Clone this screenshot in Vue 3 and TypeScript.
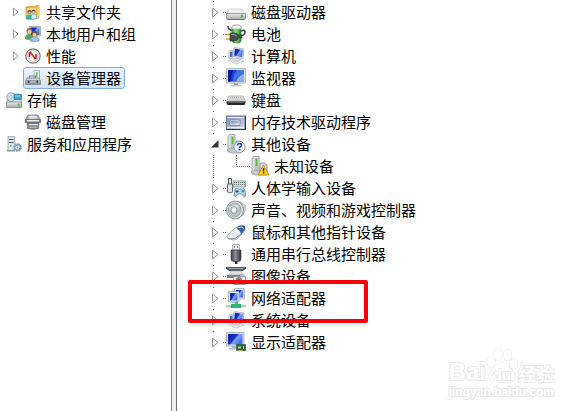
<script setup lang="ts">
import { ref } from 'vue'

interface ConsoleItem {
  label: string
  icon: string
  level: number
  expandable?: boolean
  selected?: boolean
}

interface Device {
  label: string
  icon: string
  children?: { label: string; icon: string }[]
}

const consoleItems: ConsoleItem[] = [
  { label: '共享文件夹', icon: 'share', level: 1, expandable: true },
  { label: '本地用户和组', icon: 'users', level: 1, expandable: true },
  { label: '性能', icon: 'perf', level: 1, expandable: true },
  { label: '设备管理器', icon: 'devmgr', level: 1, selected: true },
  { label: '存储', icon: 'storage', level: 0 },
  { label: '磁盘管理', icon: 'diskmgr', level: 1 },
  { label: '服务和应用程序', icon: 'services', level: 0 },
]

const devices: Device[] = [
  { label: '磁盘驱动器', icon: 'disk' },
  { label: '电池', icon: 'battery' },
  { label: '计算机', icon: 'computer' },
  { label: '监视器', icon: 'monitor' },
  { label: '键盘', icon: 'keyboard' },
  { label: '内存技术驱动程序', icon: 'memory' },
  { label: '其他设备', icon: 'other', children: [{ label: '未知设备', icon: 'unknown' }] },
  { label: '人体学输入设备', icon: 'hid' },
  { label: '声音、视频和游戏控制器', icon: 'sound' },
  { label: '鼠标和其他指针设备', icon: 'mouse' },
  { label: '通用串行总线控制器', icon: 'usb' },
  { label: '图像设备', icon: 'imaging' },
  { label: '网络适配器', icon: 'network' },
  { label: '系统设备', icon: 'computer' },
  { label: '显示适配器', icon: 'display' },
]

const othersOpen = ref(true)

function toggle(device: Device) {
  if (device.children) othersOpen.value = !othersOpen.value
}
</script>

<template>
  <svg class="defs" aria-hidden="true">
    <defs>
      <linearGradient id="screen" x1="0" y1="0" x2="1" y2="0.6">
        <stop offset="0" stop-color="#0a1a9c" />
        <stop offset="0.5" stop-color="#1531cf" />
        <stop offset="0.6" stop-color="#7fa5f3" />
        <stop offset="1" stop-color="#3f6ce8" />
      </linearGradient>
      <linearGradient id="metal" x1="0" y1="0" x2="0" y2="1">
        <stop offset="0" stop-color="#e9ebec" />
        <stop offset="1" stop-color="#a3a8ad" />
      </linearGradient>
      <linearGradient id="green" x1="0" y1="0" x2="1" y2="0">
        <stop offset="0" stop-color="#2c9c2c" />
        <stop offset="0.4" stop-color="#8bea78" />
        <stop offset="1" stop-color="#1d8426" />
      </linearGradient>
      <linearGradient id="dark" x1="0" y1="0" x2="1" y2="0">
        <stop offset="0" stop-color="#3e4146" />
        <stop offset="0.45" stop-color="#8d9096" />
        <stop offset="1" stop-color="#303236" />
      </linearGradient>
      <linearGradient id="slate" x1="0" y1="0" x2="1" y2="1">
        <stop offset="0" stop-color="#8590b8" />
        <stop offset="1" stop-color="#d3daee" />
      </linearGradient>
    </defs>

    <symbol id="share" viewBox="0 0 16 16">
      <path d="M1 3l6-1 1 1 5-2 1 1v12l-5 1H1z" fill="#e2b04a" stroke="#c99a3c" stroke-width=".7" />
      <path d="M2 4h9v10H2z" fill="#f6d98a" />
      <path d="M12 3l2-1v11l-2 1z" fill="#f5cf62" />
      <circle cx="4.5" cy="8" r="2" fill="#5b4636" /><circle cx="8.500" cy="7.500" r="2" fill="#67503c" />
      <circle cx="4.500" cy="8.600" r="1.200" fill="#f1cda8" /><circle cx="8.500" cy="8.200" r="1.200" fill="#f1cda8" />
      <path d="M1 15q0-4.500 3.500-4.500T8 15q-3 1-7 0z" fill="#35b8a6" />
      <path d="M6 13.500q0-3.500 3-3.500t2.500 4.500q-2 1-5 .5z" fill="#d6edf2" stroke="#3d9bb4" stroke-width=".6" />
    </symbol>

    <symbol id="users" viewBox="0 0 16 16">
      <path d="M4.500.5h11v9.500h-11z" fill="#d8dde3" stroke="#8d98a4" stroke-width=".7" />
      <path d="M5.500 1.500h9V9h-9z" fill="url(#screen)" />
      <circle cx="4.500" cy="5" r="3" fill="#8a6f52" /><circle cx="4.500" cy="6" r="2" fill="#efc7a1" />
      <path d="M0 13q0-5 4-5t4 5q-4 2-8 0z" fill="#4fac62" />
      <circle cx="9.500" cy="8" r="3" fill="#71543c" /><circle cx="9.500" cy="9" r="2" fill="#f2cda9" />
      <path d="M5 15q0-4 4.500-4t4.500 4q-4.500 1.500-9 0z" fill="#9cc5e8" stroke="#4a7db0" stroke-width=".5" />
    </symbol>

    <symbol id="perf" viewBox="0 0 16 16">
      <circle cx="8" cy="8" r="7.200" fill="#f4f4f4" stroke="#7b7b78" stroke-width="1.200" />
      <circle cx="8" cy="8" r="5.400" fill="#fff" stroke="#c4c4c0" stroke-width=".8" />
      <path d="M4.500 9V5l1-.5 4.500 6 1-.5V6" fill="none" stroke="#d31b1b" stroke-width="1.600" />
    </symbol>

    <symbol id="devmgr" viewBox="0 0 16 16">
      <path d="M9 .5h5.500v9H9z" fill="#eef1f2" stroke="#9aa2a6" stroke-width=".8" />
      <path d="M11 2h1.500v5H11z" fill="#63bd5c" />
      <path d="M4.500 8V6h6v2" fill="none" stroke="#7e878e" stroke-width="1.200" />
      <path d="M2 8h12l1.500 3H.5z" fill="#cfd5da" stroke="#717b84" stroke-width=".7" />
      <path d="M.5 11h15v3.500H.5z" fill="#8d979f" stroke="#656f77" stroke-width=".6" />
      <path d="M1 11.500h14v1H1z" fill="#c2cad0" /><path d="M3 10.500h1.500V13H3zm8.500 0H13V13h-1.500z" fill="#3e474f" />
    </symbol>

    <symbol id="storage" viewBox="0 0 16 16">
      <path d="M1 9l2-7h11l1.500 8v5H1z" fill="#dfe2e4" stroke="#858c91" stroke-width=".7" />
      <circle cx="5" cy="5" r="4.300" fill="#cfe3e6" stroke="#718792" stroke-width=".7" />
      <circle cx="5" cy="5" r="1.300" fill="#fff" stroke="#7e9198" stroke-width=".5" />
      <path d="M8 2.500h7.500v5H8z" fill="#35a5d2" stroke="#1f6e96" stroke-width=".6" />
      <path d="M9 3.500h5v1H9z" fill="#a7e4f5" />
      <path d="M.5 10h15v5.500H.5z" fill="url(#metal)" stroke="#777e83" stroke-width=".7" />
      <path d="M12 11.500h1.500V14H12z" fill="#37b52f" />
    </symbol>

    <symbol id="diskmgr" viewBox="0 0 16 16">
      <path d="M3 1h10l2 4v3H1V5z" fill="#a4a8ab" stroke="#747779" stroke-width=".7" />
      <ellipse cx="8" cy="3.200" rx="4.500" ry="1.600" fill="#e1e3e4" />
      <path d="M0 5h16v4H0z" fill="#777a7c" /><path d="M2 6h12v1.500H2z" fill="#eceeee" />
      <path d="M2 9h12l-.5 5.500q-5.500 1.500-11 0z" fill="#85898b" stroke="#5f6365" stroke-width=".7" />
      <path d="M4 10h9v1.300H4z" fill="#e1e2e2" /><path d="M4 13h8v1H4z" fill="#b4b6b7" />
    </symbol>

    <symbol id="services" viewBox="0 0 16 16">
      <path d="M2 .5h6.500v14H2z" fill="#dfe5e8" stroke="#98a3aa" stroke-width=".8" />
      <path d="M3 3.500h4.500M3 6.500h4.500" stroke="#4f5a62" stroke-width="1" />
      <path d="M1 14h8v1.500H1z" fill="#8a959d" /><path d="M4 9h1.500v1.500H4z" fill="#46b24a" />
      <circle cx="11.500" cy="11.500" r="2.800" fill="#fff" stroke="#82a4c5" stroke-width="1.700" />
      <circle cx="11.500" cy="11.500" r="4" fill="none" stroke="#6e92b5" stroke-width="1" stroke-dasharray="1.570 1.570" />
      <circle cx="11.500" cy="11.500" r="1" fill="#82a4c5" />
    </symbol>

    <symbol id="disk" viewBox="0 0 20 20">
      <path d="M3.500 7h13l3 4.500H.5z" fill="#eef0f1" stroke="#c5c9cb" stroke-width=".7" />
      <path d="M.5 11.500h19V16q0 1.500-1.500 1.500H2Q.5 17.500.5 16z" fill="url(#metal)" stroke="#868b8f" stroke-width=".7" />
      <path d="M1.500 17.500h17" stroke="#6d7175" /><path d="M15 12.500h1.700v3H15z" fill="#22b422" />
    </symbol>

    <symbol id="battery" viewBox="0 0 20 20">
      <path d="M2 2q0 4 5 5" fill="none" stroke="#444a4d" stroke-width="1.600" />
      <path d="M15 7q4-2 4 1t-4 4" fill="none" stroke="#444a4d" stroke-width="1.600" />
      <path d="M6 3q0-2 4.500-2T15 3v14q0 2-4.500 2T6 17z" fill="url(#green)" stroke="#35783b" stroke-width=".7" />
      <path d="M6 3q0-2 4.500-2T15 3v2H6z" fill="#f1f4f5" stroke="#9fa8ab" stroke-width=".7" />
      <path d="M0 10.500h5M0 15h5" stroke="#d39e28" stroke-width="1.700" />
      <path d="M4 9h4q4 0 4 2h4v3h-4q0 3-4 3H4z" fill="#4a4e50" stroke="#26292b" stroke-width=".6" />
      <path d="M5 10.500h3l3 1.500" stroke="#a2a7aa" fill="none" />
    </symbol>

    <symbol id="computer" viewBox="0 0 20 20">
      <path d="M3 5l4-1v8l-4 1z" fill="#e4e8eb" stroke="#a3abb3" stroke-width=".7" />
      <path d="M4 6l2.500-.5v5l-2.500.6z" fill="#4b65c4" />
      <path d="M8 1.500l10 1.500-1 9.500-10-2z" fill="#dde2e7" stroke="#aab2ba" stroke-width=".8" />
      <path d="M9 2.800l8 1.200-.9 7.200-8-1.600z" fill="url(#screen)" />
      <path d="M11 12l4 .7.500 2.300H11z" fill="#b9c0c6" />
      <path d="M2 14.500l8-2.500 8 3-8 3z" fill="#edf0f2" stroke="#b3babf" stroke-width=".7" />
      <path d="M4.500 14.600l5.500-1.600 5 2-5 1.800z" fill="#cfd4d9" />
    </symbol>

    <symbol id="monitor" viewBox="0 0 20 20">
      <path d="M.5.5h19v14.500H.5z" fill="#dfe2e5" stroke="#a6acb2" stroke-width=".8" />
      <path d="M2 2h16v11.500H2z" fill="#1c3fd2" /><path d="M2 2h5q-2 5-2 11.500H2z" fill="#0a1a9c" />
      <path d="M11 2h7v4q-6 1-9 7.500H7Q7 7 11 2z" fill="#4272e8" /><path d="M18 6v7.500H10q2-6 8-7.500z" fill="#8cb1f6" />
      <path d="M8 15h4v2H8z" fill="#a3a9ad" /><path d="M5 17h10v1.500H5z" fill="#c3c8cb" />
    </symbol>

    <symbol id="keyboard" viewBox="0 0 20 20">
      <path d="M3 6h14l2.500 5.500H.5z" fill="#dfe1e2" stroke="#a2a5a7" stroke-width=".8" />
      <path d="M.5 11.500h19V13q0 2-2 2h-15q-2 0-2-2z" fill="#24282b" />
      <path d="M1.500 12.300h17" stroke="#8d9194" stroke-width=".6" />
      <path d="M4 7.500h12M3.500 9h13.500M2.500 10.500h15" stroke="#969a9d" stroke-width=".7" stroke-dasharray="1 1" />
    </symbol>

    <symbol id="memory" viewBox="0 0 20 20">
      <path d="M0 3.500h20V18H0z" fill="#66708f" /><path d="M1 4.500h17.500V17H1z" fill="url(#slate)" />
      <path d="M1 5h17v1H1zM1 15h17v1H1z" fill="#e6ebf8" /><path d="M4 8h10v5.500H4z" fill="#f5f7ff" stroke="#6d7695" stroke-width=".8" />
      <path d="M5 9h8v3.500H5z" fill="url(#slate)" />
      <path d="M19.500 4v14M0 17.500h20" stroke="#30364d" />
    </symbol>

    <symbol id="case" viewBox="0 0 20 20">
      <path d="M2 3l1.500-2.500H9V16l-1 2H2z" fill="#e3e6e7" stroke="#899094" stroke-width=".8" />
      <path d="M4.500 2h4v13h-4z" fill="#bcc2c5" /><path d="M5.700 3h1.600v7H5.700z" fill="#52bd33" />
      <path d="M10 7h4l3 2v8h-7z" fill="#d7dadd" stroke="#848b8f" stroke-width=".8" />
      <path d="M1 16l3-2 13 3-2 2H5z" fill="#c7ccd0" stroke="#8a9195" stroke-width=".6" />
    </symbol>

    <symbol id="other" viewBox="0 0 20 20">
      <use href="#case" />
      <circle cx="13.500" cy="13" r="5.500" fill="#eaf0f8" stroke="#8e9eb9" stroke-width="1" />
      <path d="M11.500 11.500q0-2 2-2t2 1.700q0 1-1 1.500t-1 1.300" fill="none" stroke="#1845b2" stroke-width="1.500" />
      <path d="M12.700 15h1.600v1.500h-1.600z" fill="#1845b2" />
    </symbol>

    <symbol id="unknown" viewBox="0 0 20 20">
      <use href="#case" />
      <path d="M13.500 9l5.500 10H8z" fill="#ffd326" stroke="#c5900b" stroke-width="1" stroke-linejoin="round" />
      <path d="M12.800 12h1.500v3.500h-1.500zm0 4.300h1.500v1.300h-1.500z" fill="#342c0d" />
    </symbol>

    <symbol id="hid" viewBox="0 0 20 20">
      <path d="M7 3h12.500v6H7z" fill="#d3d8db" stroke="#7c8489" stroke-width=".7" />
      <path d="M8 4.500h11M8 6.500h11" stroke="#7b8286" stroke-dasharray="1.200 .8" />
      <path d="M2.500.5h3V6h-3z" fill="#eef2f6" stroke="#4b545c" stroke-width=".9" />
      <path d="M1.500 6h5v8q-2.500 2-5 0z" fill="#dde1e5" stroke="#58616a" stroke-width=".9" />
      <path d="M9 11q2-1.500 3.500 0h3q2.500-1.500 3.500 1l.5 6q-2 2-3.500-2h-4q-2 4-4 2z" fill="#b5cfe0" stroke="#567e97" stroke-width=".7" />
      <path d="M10.500 12h1v3h-1zM9.500 13h3v1h-3z" fill="#34576b" /><circle cx="16.800" cy="13.300" r="1.200" fill="#1d9ed4" />
    </symbol>

    <symbol id="sound" viewBox="0 0 20 20">
      <path d="M12 1l7 4q1.500 5-2 10l-6 4z" fill="#d6dbde" stroke="#9aa4a9" stroke-width=".8" />
      <ellipse cx="9" cy="10" rx="8.500" ry="9" fill="#dde2e5" stroke="#8b969c" stroke-width="1" />
      <ellipse cx="8.500" cy="10" rx="6.500" ry="7" fill="#b9c3c8" stroke="#929da3" stroke-width=".7" />
      <path d="M3 7q5-3 10-1l-4 3-3 1z" fill="#eef2f4" />
      <ellipse cx="8" cy="10" rx="3" ry="3.500" fill="#dfe5e8" stroke="#88949b" stroke-width=".8" />
      <circle cx="7.500" cy="10" r="1.500" fill="#f8fafb" />
    </symbol>

    <symbol id="mouse" viewBox="0 0 20 20">
      <path d="M1 14q2-3 7-7 5-4 9-3 4 1 1 5-3 5-7 8-4 2-8 0-2-1-2-3z" fill="#eceef0" stroke="#a0a6ab" stroke-width=".8" />
      <path d="M12 4.500q4-2 6.500-.5 1.500 2-.5 5l-3 4q0-4-4-6z" fill="#43629b" />
      <path d="M12.500 5.500q4-1.500 5 1" fill="none" stroke="#cad7ed" /><path d="M2 16q4 2 8 0 4-3 5-4" fill="none" stroke="#858c92" />
    </symbol>

    <symbol id="usb" viewBox="0 0 20 20">
      <path d="M6.500.5h7V6h-7z" fill="#eeeff1" stroke="#9b9ea4" stroke-width=".8" />
      <path d="M8 2h1v2H8zm3 0h1v2h-1z" fill="#7e8288" />
      <path d="M5 6h10v9q0 2.500-3 2.500H8q-3 0-3-2.500z" fill="url(#dark)" stroke="#34373b" stroke-width=".6" />
      <path d="M9 17h2.500v3H9z" fill="#33363a" />
    </symbol>

    <symbol id="imaging" viewBox="0 0 20 20">
      <path d="M0 1h20v1.500L17 5H3L0 2.500z" fill="#4a555a" /><path d="M2 2h16l-1 1H3z" fill="#a2b4b8" />
      <path d="M5 5h10l2 4H3z" fill="#dde2e4" stroke="#a6aeb2" stroke-width=".6" />
      <path d="M1 9h16v3H1z" fill="#7c878c" /><path d="M2 12h9v2H2z" fill="#f2f4f5" />
      <path d="M2 14h8v2H2z" fill="#4c6676" /><path d="M7.500 10.500h12v8h-12z" fill="#e6eaec" stroke="#7c888f" stroke-width=".8" />
      <path d="M14 8.500h4v2h-4z" fill="#cfd5d8" stroke="#7c888f" stroke-width=".6" />
      <circle cx="13" cy="14.500" r="3" fill="#8696a0" stroke="#5d6b74" stroke-width=".7" /><circle cx="13" cy="14.500" r="1.300" fill="#1f5a92" />
    </symbol>

    <symbol id="network" viewBox="0 0 20 20">
      <path d="M8.500.5h10V11h-10z" fill="#e2e7eb" stroke="#a7afb8" stroke-width=".8" />
      <path d="M10 2h7.200v7.500H10z" fill="url(#screen)" />
      <path d="M2.500 3.500H13V14H2.500z" fill="#e6eaee" stroke="#9ca5ae" stroke-width=".8" />
      <path d="M4 5h7.500v7.500H4z" fill="url(#screen)" />
      <path d="M6 14h4v1.500H6z" fill="#b7bfc6" /><path d="M9 13.500h3V17H9z" fill="#3fbf89" />
      <path d="M0 17h20v2.500H0z" fill="#bcc6cb" /><path d="M5 16h10v4H5z" fill="#22b66f" />
    </symbol>

    <symbol id="display" viewBox="0 0 20 20">
      <path d="M.5.5h17.500v13.500H.5z" fill="#dfe2e5" stroke="#a0a7ae" stroke-width=".8" />
      <path d="M2 2h14.500v10.500H2z" fill="url(#screen)" /><path d="M6 14h4v2H6zM3 16h7v1.500H3z" fill="#b4babe" />
      <path d="M10.500 12.500h9v6h-9z" fill="#276340" stroke="#174d2b" stroke-width=".6" />
      <path d="M12 14.500h3v2h-3z" fill="#b5ceb1" /><path d="M17.500 14v3" stroke="#c5dbbd" />
      <path d="M11.500 18.800h5" stroke="#d7bf4d" />
    </symbol>
  </svg>

  <div class="window">
    <nav class="console" aria-label="计算机管理">
      <div v-for="item in consoleItems" :key="item.label" class="console-row" :class="{ root: item.level === 0 }">
        <button v-if="item.expandable" class="expander small" type="button" :aria-label="item.label">
          <svg viewBox="0 0 6 10"><path d="M.5 1v8L5 5z" fill="#fff" stroke="#9a9a9a" /></svg>
        </button>
        <span v-else class="expander small"></span>
        <a href="#" class="console-link" :class="{ selected: item.selected }">
          <svg class="icon16" aria-hidden="true"><use :href="'#' + item.icon" /></svg>
          <span>{{ item.label }}</span>
        </a>
      </div>
    </nav>

    <div class="splitter"></div>

    <main class="devices">
      <ul class="tree">
        <li v-for="device in devices" :key="device.label">
          <div class="device-row">
            <button class="expander" type="button" :aria-label="device.label" @click="toggle(device)">
              <svg v-if="device.children && othersOpen" class="open" viewBox="0 0 8 8">
                <path d="M7.500 0v7.500H0z" fill="#333" />
              </svg>
              <svg v-else viewBox="0 0 7 11"><path d="M.5 1v9L6 5.500z" fill="#fff" stroke="#999" /></svg>
            </button>
            <span class="dots"></span>
            <svg class="icon20" aria-hidden="true"><use :href="'#' + device.icon" /></svg>
            <span class="label">{{ device.label }}</span>
          </div>
          <ul v-if="device.children && othersOpen" class="branch">
            <li v-for="child in device.children" :key="child.label" class="device-row child">
              <span class="elbow"></span>
              <svg class="icon20" aria-hidden="true"><use :href="'#' + child.icon" /></svg>
              <span class="label">{{ child.label }}</span>
            </li>
          </ul>
        </li>
      </ul>
      <div class="marker"></div>
    </main>

    <div class="watermark">
      <div class="brand">
        <span class="latin">Bai</span>
        <span class="paw">
          <svg viewBox="0 0 32 36" aria-hidden="true">
            <g fill="#fff" stroke="#e6e6e6" stroke-width="1.200">
              <ellipse cx="5" cy="14" rx="4" ry="5" />
              <ellipse cx="12" cy="6.500" rx="4" ry="5.500" />
              <ellipse cx="21.500" cy="7" rx="4" ry="5.500" />
              <ellipse cx="27.500" cy="16" rx="4" ry="5" />
              <path d="M16 14c5 0 6 5 10 8s4 12-3 12H9c-8 0-7-9-3-12s5-8 10-8z" />
            </g>
          </svg>
          <span class="du">du</span>
        </span>
        <span class="cjk">经验</span>
      </div>
      <div class="site">jingyan.baidu.com</div>
    </div>
  </div>
</template>

<style>
body {
  background: #fff;
}
</style>

<style scoped>
.defs {
  position: absolute;
  width: 0;
  height: 0;
}

.window {
  position: relative;
  display: flex;
  min-height: 100vh;
  overflow: hidden;
  background: #fff;
  color: #000;
  font-family: "Noto Sans CJK SC", sans-serif;
  font-size: 15px;
  line-height: 20px;
  white-space: nowrap;
}

.console {
  flex: none;
  box-sizing: border-box;
  width: 171px;
  padding: 1px 0 0 13px;
}

.console-row {
  display: flex;
  align-items: center;
  height: 22px;
}

.console-row.root {
  margin-left: -19px;
}

.console-link {
  display: flex;
  align-items: center;
  gap: 5px;
  height: 20px;
  padding: 0 3px 0 1px;
  border: 1px solid transparent;
  border-radius: 3px;
  color: inherit;
  text-decoration: none;
}

.console-link.selected {
  border-color: #84acdd;
  background: linear-gradient(#edf5fe, #cfe3fb);
}

.icon16 {
  flex: none;
  width: 16px;
  height: 16px;
}

.icon20 {
  flex: none;
  width: 20px;
  height: 20px;
}

.expander {
  display: flex;
  flex: none;
  align-items: center;
  width: 11px;
  height: 20px;
  padding: 0;
  border: 0;
  background: none;
}

.expander.small {
  width: 10px;
}

.expander svg {
  width: 7px;
  height: 11px;
}

.expander.small svg {
  width: 6px;
  height: 10px;
}

.expander svg.open {
  width: 8px;
  height: 8px;
  margin-left: -1px;
}

.splitter {
  flex: none;
  width: 4px;
  border-right: 1px solid #6d6f72;
  border-left: 1px solid #818487;
  background: #efefef;
}

.devices {
  position: relative;
  flex: 1;
  padding: 1px 0 0 35px;
}

.tree,
.branch {
  margin: 0;
  padding: 0;
  list-style: none;
}

.device-row {
  position: relative;
  display: flex;
  align-items: center;
  height: 22px;
}

.device-row::before {
  position: absolute;
  top: 0;
  left: 1px;
  width: 1px;
  height: 1px;
  background: #777;
  content: "";
}

.dots {
  width: 3px;
  border-top: 1px dotted #777;
}

.label {
  margin-left: 5px;
}

.child {
  padding-left: 24px;
}

.child .label {
  margin-left: 4px;
}

.child::before {
  height: 22px;
  background: repeating-linear-gradient(#888 0 1px, transparent 1px 2px);
}

.elbow {
  align-self: flex-start;
  box-sizing: border-box;
  width: 14px;
  height: 12px;
  border-bottom: 1px dotted #777;
  border-left: 1px dotted #777;
}

.marker {
  position: absolute;
  top: 280px;
  left: 11px;
  box-sizing: border-box;
  width: 180px;
  height: 43px;
  border: 4px solid #fb0007;
  border-radius: 2px;
}

.watermark {
  position: absolute;
  right: 32px;
  bottom: 11px;
  color: #fff;
  font-family: "Liberation Sans", "Noto Sans CJK SC", sans-serif;
  font-weight: 700;
  paint-order: stroke fill;
  -webkit-text-stroke: 2px #eaeaea;
}

.brand {
  display: flex;
  align-items: flex-end;
  height: 36px;
}

.latin {
  font-size: 24px;
  line-height: 24px;
}

.paw {
  position: relative;
  width: 32px;
  height: 36px;
}

.paw svg {
  display: block;
  width: 32px;
  height: 36px;
}

.du {
  position: absolute;
  right: 0;
  bottom: 1px;
  left: 0;
  font-size: 15px;
  line-height: 16px;
  text-align: center;
}

.cjk {
  font-family: "Noto Sans CJK SC", sans-serif;
  font-size: 18px;
  line-height: 22px;
}

.site {
  font-size: 12px;
  line-height: 16px;
  text-align: right;
}
</style>
